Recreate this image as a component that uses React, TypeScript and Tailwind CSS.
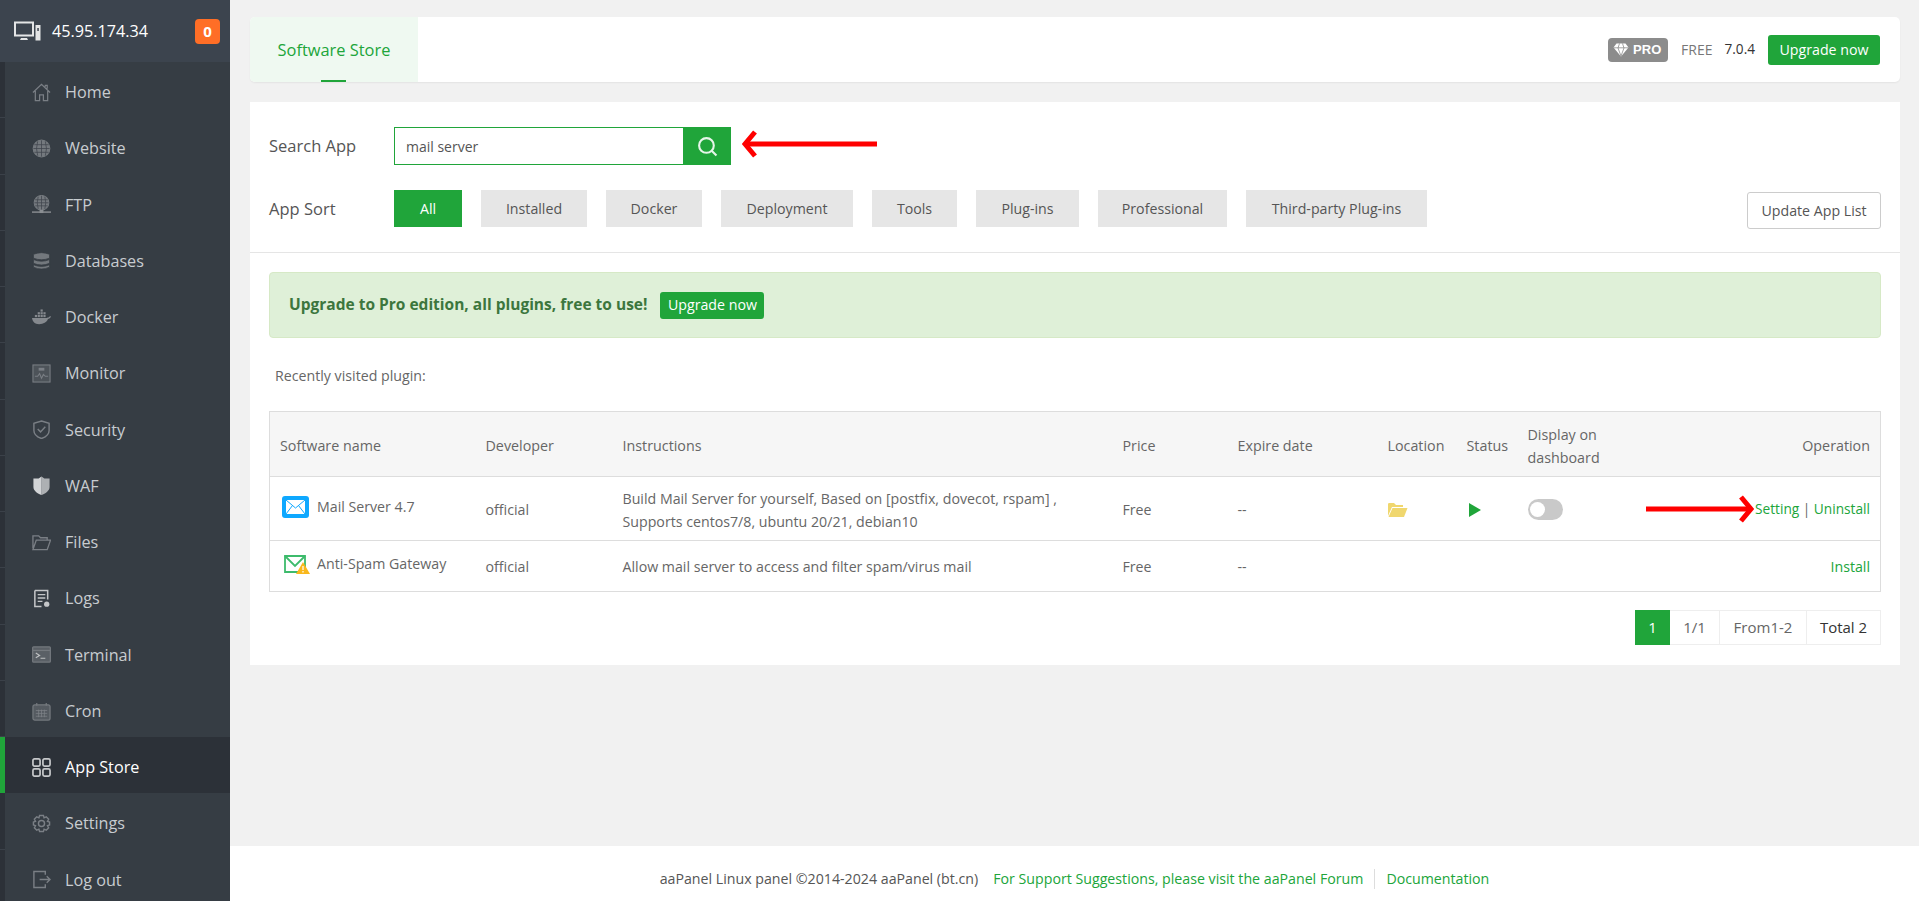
import type { ReactNode } from "react";

const g = { fill: "none", stroke: "#7a7f85", strokeWidth: 1.3 };

// sidebar icons, all drawn on a 20x20 box
const icons: Record<string, ReactNode> = {
  home: (
    <g {...g}>
      <path d="M1 10 10 1.5 19 10M3.5 8.5V18.5H8V12.5H12V18.5H16.5V8.5M14 4V2.5H16V6" />
    </g>
  ),
  website: (
    <g {...g}>
      <circle cx="10" cy="10" r="8.7" fill="#74797e" stroke="#74797e" />
      <path d="M1.5 10H18.5M2.5 6H17.5M2.5 14H17.5M10 1.5V18.5M6 2.5Q3.5 10 6 17.5M14 2.5Q16.5 10 14 17.5" stroke="#3f454c" strokeWidth="0.8" />
    </g>
  ),
  ftp: (
    <g {...g}>
      <circle cx="10" cy="8.2" r="7.6" fill="#74797e" stroke="#74797e" />
      <path d="M2.6 8.2H17.4M3.5 5H16.5M3.500 11.400H16.500M10 .8V15.600M6.500 1.800Q4.500 8.200 6.500 14.600M13.500 1.800Q15.500 8.200 13.500 14.600" stroke="#3f454c" strokeWidth="0.8" />
      <path d="M0 18H20" stroke="#8a8e92" strokeWidth="1.500" />
      <rect x="8" y="15.500" width="4" height="3.500" fill="#8a8e92" stroke="none" />
    </g>
  ),
  databases: (
    <g fill="#73787d" stroke="#363d44" strokeWidth="0.8">
      <path d="M1.5 14.5V17Q10 21 18.5 17V14.5Q10 18 1.5 14.5Z" />
      <path d="M1.5 9V13Q10 16.5 18.5 13V9Q10 12.5 1.5 9Z" />
      <path d="M1.5 3.5V7.5Q10 11 18.5 7.5V3.5Q10 0 1.5 3.5Z" />
    </g>
  ),
  docker: (
    <g fill="#85898e">
      <path d="M0 10.5H15.5C16.5 10.5 17.5 10 18 9.5 18.5 8.7 19.2 8.6 20 9 19.5 10.5 18 11.5 16.8 11.6 15.5 15 12 17 7.5 17 3 17 .5 14.5 0 10.5Z" />
      <rect x="3" y="7.3" width="2.3" height="2.3" />
      <rect x="6" y="7.3" width="2.3" height="2.3" />
      <rect x="9" y="7.3" width="2.3" height="2.3" />
      <rect x="12" y="7.3" width="2.3" height="2.3" />
      <rect x="6" y="4.4" width="2.3" height="2.3" />
      <rect x="9" y="4.4" width="2.3" height="2.3" />
      <rect x="12" y="4.4" width="2.3" height="2.3" />
      <rect x="9" y="1.5" width="2.3" height="2.3" />
    </g>
  ),
  monitor: (
    <g {...g} strokeWidth="1.1">
      <rect x="1" y="1" width="18" height="18" fill="#4d5359" />
      <path d="M3 13H6L8 10 10 15 12 11 14 13H17" />
      <rect x="7" y="4" width="6" height="3" fill="#7a7f85" stroke="none" />
    </g>
  ),
  security: (
    <g {...g} strokeWidth="1.5">
      <path d="M10 1 18 3.5V11C18 15 14 18 10 19.5 6 18 2 15 2 11V3.5Z" />
      <path d="M6 9.5 9 12.5 14 7" />
    </g>
  ),
  waf: (
    <g>
      <path d="M10 .5 13 2.5 18.5 2.5V11.5C18.5 15.5 14 18.5 10 20Z" fill="#adb0b3" />
      <path d="M10 .5 7 2.5 1.5 2.5V11.5C1.5 15.5 6 18.5 10 20Z" fill="#d2d4d6" />
    </g>
  ),
  files: (
    <g {...g} strokeWidth="1.4">
      <path d="M1 16V3H7L9 5H16V7.5M1 17.5H16L19.5 7.5H4.5L1 17.5Z" />
    </g>
  ),
  logs: (
    <g>
      <path d="M3 1.5H16.5V11M10 18.5H3V1.5" fill="none" stroke="#c4c6c8" strokeWidth="1.6" />
      <path d="M6 6H14M6 9.5H14M6 13H11" stroke="#c4c6c8" strokeWidth="1.4" />
      <circle cx="15.5" cy="16" r="2.8" fill="#c4c6c8" />
    </g>
  ),
  terminal: (
    <g {...g}>
      <rect x="0.7" y="2" width="18.6" height="16" rx="1" fill="#5a6066" stroke="#74797e" />
      <path d="M1 5.7H19" stroke="#74797e" />
      <path d="M4 8.5 8 11 4 13.5M9 14H14" stroke="#c0c2c4" strokeWidth="1.2" />
    </g>
  ),
  cron: (
    <g {...g}>
      <rect x="1" y="3" width="18" height="16" rx="2" fill="#555b61" stroke="#74797e" />
      <path d="M5 1V4M15 1V4" stroke="#74797e" />
      <path d="M4 9H16M4 12H16M4 15H16M7 8V16M10 8V16M13 8V16" stroke="#7d8287" strokeWidth="0.8" />
    </g>
  ),
  store: (
    <g fill="none" stroke="#c6c8ca" strokeWidth="1.8">
      <rect x="1" y="1" width="7.5" height="7.5" rx="1.6" />
      <rect x="11.5" y="1" width="7.5" height="7.5" rx="1.6" />
      <rect x="1" y="11.5" width="7.5" height="7.5" rx="1.6" />
      <rect x="11.5" y="11.5" width="7.5" height="7.5" rx="1.6" />
    </g>
  ),
  settings: (
    <g {...g} strokeWidth="1.5">
      <path d="M8 1.5H12L12.7 4 15 3 17.5 5.5 16.3 7.8 18.5 8.5V11.5L16.3 12.2 17.5 14.5 15 17 12.7 16 12 18.5H8L7.3 16 5 17 2.5 14.5 3.7 12.2 1.5 11.5V8.5L3.7 7.8 2.5 5.5 5 3 7.3 4Z" />
      <circle cx="10" cy="10" r="3.2" />
    </g>
  ),
  logout: (
    <g {...g} strokeWidth="1.5">
      <path d="M14 5V1.5H2V18.5H14V15M8 10H19M15.5 6.5 19 10 15.5 13.5" />
    </g>
  ),
};

const navItems = [
  { label: "Home", icon: "home" },
  { label: "Website", icon: "website" },
  { label: "FTP", icon: "ftp" },
  { label: "Databases", icon: "databases" },
  { label: "Docker", icon: "docker" },
  { label: "Monitor", icon: "monitor" },
  { label: "Security", icon: "security" },
  { label: "WAF", icon: "waf" },
  { label: "Files", icon: "files" },
  { label: "Logs", icon: "logs" },
  { label: "Terminal", icon: "terminal" },
  { label: "Cron", icon: "cron" },
  { label: "App Store", icon: "store", active: true },
  { label: "Settings", icon: "settings" },
  { label: "Log out", icon: "logout" },
];

const sortTabs = [
  { label: "All", w: "w-[68px]", active: true },
  { label: "Installed", w: "w-[106px]" },
  { label: "Docker", w: "w-[96px]" },
  { label: "Deployment", w: "w-[132px]" },
  { label: "Tools", w: "w-[85px]" },
  { label: "Plug-ins", w: "w-[103px]" },
  { label: "Professional", w: "w-[129px]" },
  { label: "Third-party Plug-ins", w: "w-[181px]" },
];

function RedArrow({ className, w, flip }: { className: string; w: number; flip?: boolean }) {
  return (
    <svg
      className={className}
      width={w}
      height="28"
      viewBox={`0 0 ${w} 28`}
      style={flip ? { transform: "scaleX(-1)" } : undefined}
    >
      <path d={`M0 14H${w - 4}`} stroke="#ff0000" strokeWidth="5" fill="none" />
      <path d={`M${w - 13} 2 ${w - 3} 14 ${w - 13} 26`} stroke="#ff0000" strokeWidth="5" fill="none" />
    </svg>
  );
}

function Sidebar() {
  return (
    <aside className="w-[230px] shrink-0 bg-[#363d44] overflow-hidden">
      <div className="h-[62px] bg-[#3c444e] flex items-center pl-[14px] pr-[10px]">
        <svg width="28" height="20" viewBox="0 0 28 20" className="shrink-0">
          <rect x="1" y="1.5" width="18" height="13" fill="none" stroke="#e4e5e6" strokeWidth="2" />
          <path d="M7 17H13L14 19H6Z" fill="#e4e5e6" />
          <rect x="21.500" y="4" width="5" height="15.500" fill="#e4e5e6" />
          <rect x="23.300" y="7" width="1.500" height="3" fill="#3c444e" />
        </svg>
        <span className="ml-[10px] text-[16.2px] text-white">45.95.174.34</span>
        <span className="ml-auto w-[25px] h-[25px] rounded-[4px] bg-[#ff6e26] text-white font-bold text-[15px] flex items-center justify-center">
          0
        </span>
      </div>
      {navItems.map((item) => (
        <div
          key={item.label}
          className={`h-[56.28px] flex ${item.active ? "bg-[#2c3138]" : ""}`}
        >
          <div
            className={`w-[5px] shrink-0 ${
              item.active ? "bg-[#20a53a]" : "bg-[#2c3138] border-b border-[#3b4149]"
            }`}
          />
          <div className="flex items-center pl-[27px] pt-[4px]">
            <svg width="19" height="19" viewBox="0 0 20 20" className="shrink-0">
              {icons[item.icon]}
            </svg>
            <span
              className={`ml-[14px] text-[16.2px] ${
                item.active ? "text-white" : "text-[#c8ccd0]"
              }`}
            >
              {item.label}
            </span>
          </div>
        </div>
      ))}
    </aside>
  );
}

function TopBar() {
  return (
    <div className="h-[65px] bg-white rounded-[5px] shadow-[0_1px_2px_rgba(0,0,0,0.06)] flex items-center overflow-hidden">
      <div className="relative w-[168px] h-full pt-[1px] bg-[#eff9f1] flex items-center justify-center text-[16.4px] text-[#20a53a]">
        Software Store
        <div className="absolute bottom-0 left-[71px] w-[25px] h-[2px] bg-[#20a53a]" />
      </div>
      <div className="ml-auto flex items-center pr-[20px]">
        <div className="w-[60px] h-[24px] rounded-[4px] bg-[#8c8c8c] flex items-center pl-[5px] gap-[4px]">
          <svg width="16" height="14" viewBox="0 0 16 14">
            <path d="M3.500 0.500H12.500L15.500 4.500 8 13.500 0.500 4.500Z" fill="#fff" />
            <path d="M0.500 4.800H15.500M5 5 8 13M11 5 8 13M5 5 6.500 0.500M11 5 9.500 0.500" stroke="#8c8c8c" strokeWidth="0.8" fill="none" />
          </svg>
          <span className="font-['Liberation_Sans'] font-bold text-[13px] text-white">PRO</span>
        </div>
        <span className="ml-[13px] text-[14px] text-[#777]">FREE</span>
        <span className="ml-[12px] text-[13.6px] text-[#333]">7.0.4</span>
        <button className="ml-[13px] w-[112px] h-[30px] rounded-[3px] bg-[#20a53a] text-white text-[14.2px]">
          Upgrade now
        </button>
      </div>
    </div>
  );
}

function Filters() {
  return (
    <div className="h-[151px] border-b border-[#e5e5e5] px-[19px] pt-[25px] relative">
      <div className="flex items-center h-[38px]">
        <span className="w-[125px] text-[16.5px] text-[#555]">Search App</span>
        <div className="w-[290px] h-[38px] border border-[#20a53a] flex items-center pl-[11px] text-[14px] text-[#555]">
          mail server
        </div>
        <button className="w-[47px] h-[38px] bg-[#20a53a] flex items-center justify-center">
          <svg width="21" height="21" viewBox="0 0 20 20" fill="none" stroke="#e6f5e9" strokeWidth="2">
            <circle cx="9" cy="9" r="7" />
            <path d="M14 14 18.500 18.500" />
          </svg>
        </button>
      </div>
      <div className="flex items-start mt-[25px]">
        <span className="w-[125px] h-[37px] pt-[2px] flex items-center text-[16.5px] text-[#555]">App Sort</span>
        <div className="flex gap-[19px]">
          {sortTabs.map((tab) => (
            <div
              key={tab.label}
              className={`${tab.w} h-[37px] pt-[1px] flex items-center justify-center text-[14.2px] ${
                tab.active ? "bg-[#20a53a] text-white" : "bg-[#e6e6e6] text-[#555]"
              }`}
            >
              {tab.label}
            </div>
          ))}
        </div>
        <button className="ml-auto w-[134px] h-[37px] mt-[2px] border border-[#ccc] rounded-[3px] bg-white text-[14.2px] text-[#555]">
          Update App List
        </button>
      </div>
      <RedArrow flip w={135} className="absolute left-[492px] top-[28px]" />
    </div>
  );
}

function PluginTable() {
  const th = "px-[10px] pt-[3px] font-normal text-left text-[14.3px] text-[#666] border border-[#ddd] border-x-0";
  const td = "px-[10px] pt-[2px] text-[14.2px] text-[#666] align-middle";
  return (
    <table className="w-[1612px] table-fixed border-collapse border border-[#ddd] mt-[25px]">
      <colgroup>
        <col className="w-[206px]" />
        <col className="w-[137px]" />
        <col className="w-[500px]" />
        <col className="w-[115px]" />
        <col className="w-[150px]" />
        <col className="w-[79px]" />
        <col className="w-[61px]" />
        <col className="w-[103px]" />
        <col />
      </colgroup>
      <thead>
        <tr className="h-[65px] bg-[#f6f6f6]">
          <th className={th}>Software name</th>
          <th className={th}>Developer</th>
          <th className={th}>Instructions</th>
          <th className={th}>Price</th>
          <th className={th}>Expire date</th>
          <th className={th}>Location</th>
          <th className={th}>Status</th>
          <th className={`${th} pt-[1px] leading-[23px]`}>Display on dashboard</th>
          <th className={`${th} text-right`}>Operation</th>
        </tr>
      </thead>
      <tbody>
        <tr className="h-[64px] border-b border-[#ddd]">
          <td className={td}>
            <div className="flex items-center mb-[5px]">
              <svg width="27" height="22" viewBox="0 0 27 22" className="ml-[2px] shrink-0">
                <rect width="27" height="22" rx="3" fill="#0ea8ff" />
                <rect x="4" y="4" width="19" height="14" fill="#fff" />
                <path d="M4 4 13.500 12 23 4M4 18 10.500 9.500M23 18 16.500 9.500" fill="none" stroke="#0ea8ff" strokeWidth="1" />
              </svg>
              <span className="ml-[8px]">Mail Server 4.7</span>
            </div>
          </td>
          <td className={td}>official</td>
          <td className={`${td} leading-[23px]`}>
            Build Mail Server for yourself, Based on [postfix, dovecot, rspam] ,
            <br />
            Supports centos7/8, ubuntu 20/21, debian10
          </td>
          <td className={td}>Free</td>
          <td className={td}>--</td>
          <td className={td}>
            <svg width="20" height="15" viewBox="0 0 20 15" className="block">
              <path d="M0 14V2C0 1 1 1 1.500 1H6L8 3H15V5H4L0 14Z" fill="#f0d76e" />
              <path d="M4.500 6H19.500L16 15H0.500Z" fill="#f0d76e" />
            </svg>
          </td>
          <td className={td}>
            <svg width="12" height="14" viewBox="0 0 12 14" className="block ml-[2px]">
              <path d="M0 0 12 7 0 14Z" fill="#20a53a" />
            </svg>
          </td>
          <td className={td}>
            <div className="relative w-[35px] h-[21px] rounded-full bg-[#c9c9c9]">
              <div className="absolute left-[2px] top-[3px] w-[15px] h-[15px] rounded-full bg-white" />
            </div>
          </td>
          <td className="px-[10px] pt-[2px] text-right text-[13.7px] text-[#666] align-middle">
            <span className="text-[#20a53a]">Setting</span> | <span className="text-[#20a53a]">Uninstall</span>
          </td>
        </tr>
        <tr className="h-[51px]">
          <td className={td}>
            <div className="flex items-center mb-[6px]">
              <svg width="26" height="19" viewBox="0 0 26 19" className="ml-[4px] mt-[2px] shrink-0">
                <path d="M1 1H21V17H1Z" fill="#fff" stroke="#3dbb6c" strokeWidth="1.800" />
                <path d="M1 1 11 11 21 1" fill="none" stroke="#3dbb6c" strokeWidth="1.800" />
                <path d="M19 7 26 19H12Z" fill="#f9b81c" />
                <path d="M19 11V15M19 16V17.500" stroke="#fff" strokeWidth="1.200" />
              </svg>
              <span className="ml-[7px]">Anti-Spam Gateway</span>
            </div>
          </td>
          <td className={td}>official</td>
          <td className={td}>Allow mail server to access and filter spam/virus mail</td>
          <td className={td}>Free</td>
          <td className={td}>--</td>
          <td className={td} />
          <td className={td} />
          <td className={td} />
          <td className={`${td} text-right`}>
            <span className="text-[#20a53a]">Install</span>
          </td>
        </tr>
      </tbody>
    </table>
  );
}

function Pagination() {
  const cell = "h-[35px] flex items-center justify-center border border-l-0 border-[#eee] text-[15px]";
  return (
    <div className="flex justify-end mt-[18px]">
      <div className="w-[35px] h-[35px] bg-[#20a53a] text-white text-[15px] flex items-center justify-center">1</div>
      <div className={`${cell} w-[50px] text-[#666]`}>1/1</div>
      <div className={`${cell} w-[87px] text-[#666]`}>From1-2</div>
      <div className={`${cell} w-[74px] text-[#333]`}>Total 2</div>
    </div>
  );
}

export default function App() {
  return (
    <div className="h-[901px] flex overflow-hidden font-['Open_Sans',sans-serif]">
      <Sidebar />
      <main className="flex-1 min-w-0 bg-[#f1f1f1] flex flex-col">
        <div className="pt-[17px] pl-[20px] pr-[19px]">
          <TopBar />
          <div className="mt-[20px] h-[563px] bg-white">
            <Filters />
            <div className="relative px-[19px] pt-[19px]">
              <div className="h-[66px] rounded-[4px] border border-[#d6e9c6] bg-[#dff0d8] flex items-center pl-[19px]">
                <b className="text-[15.5px] text-[#3c763d]">Upgrade to Pro edition, all plugins, free to use!</b>
                <button className="ml-[13px] w-[104px] h-[27px] rounded-[3px] bg-[#20a53a] text-white text-[14.2px]">
                  Upgrade now
                </button>
              </div>
              <div className="mt-[28px] pl-[6px] text-[14.2px] text-[#666] leading-[20px]">Recently visited plugin:</div>
              <PluginTable />
              <Pagination />
              <RedArrow w={108} className="absolute left-[1396px] top-[242px]" />
            </div>
          </div>
        </div>
        <footer className="mt-auto h-[55px] bg-white flex items-center justify-center pt-[10px] text-[14.2px] text-[#555]">
          <span>aaPanel Linux panel ©2014-2024 aaPanel (bt.cn)</span>
          <span className="ml-[15px] text-[#20a53a]">For Support Suggestions, please visit the aaPanel Forum</span>
          <span className="mx-[11px] w-px h-[20px] bg-[#ddd]" />
          <span className="text-[#20a53a]">Documentation</span>
        </footer>
      </main>
    </div>
  );
}
